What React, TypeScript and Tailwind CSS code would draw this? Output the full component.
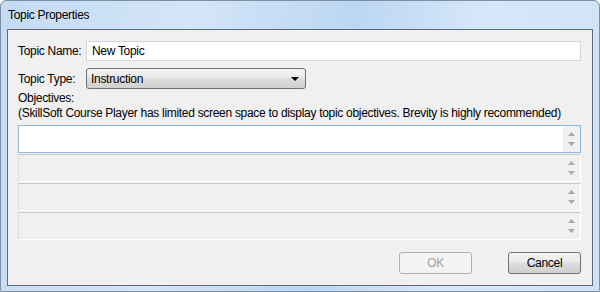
import React from "react";

const font = { fontFamily: '"Liberation Sans", Arial, sans-serif' };

// small scroll arrow for the objective boxes
const ScrollArrows: React.FC = () => (
  <div className="flex w-[17px] flex-col items-center justify-between bg-[#f0f0f0] py-[6px]">
    <svg width="7" height="4" viewBox="0 0 7 4">
      <path d="M3.5 0 L7 4 L0 4 Z" fill="#a8a8a8" />
    </svg>
    <svg width="7" height="4" viewBox="0 0 7 4">
      <path d="M0 0 L7 0 L3.5 4 Z" fill="#a8a8a8" />
    </svg>
  </div>
);

const ObjectiveBox: React.FC<{ active?: boolean }> = ({ active }) => (
  <div
    className={
      active
        ? "flex h-[28px] shrink-0 border border-[#8fb7dd] bg-white"
        : "flex h-[28px] shrink-0 border border-t-[#c8c8c8] border-l-[#dcdcdc] border-r-[#ffffff] border-b-[#ffffff] bg-[#f0f0f0]"
    }
  >
    <div className="flex-1" />
    <ScrollArrows />
  </div>
);

export default function App() {
  return (
    <div
      className="flex h-[292px] w-[600px] flex-col overflow-hidden rounded-t-[6px] border border-[#7d8fa3] bg-[linear-gradient(100deg,#c4dbf3_0%,#d3e5f8_30%,#bcd6f2_55%,#d6e7f9_75%,#cfe2f7_100%)] px-[6px] pb-[5px] tracking-[-0.3px]"
      style={font}
    >
      {/* Title bar */}
      <div className="flex h-[28px] shrink-0 items-center pl-[1px] text-[12px] text-black">Topic Properties</div>

      {/* Client area */}
      <div className="flex min-h-0 flex-1 flex-col border border-[#5f6b77] bg-[#f0f0f0] pb-[11px] pl-[10px] pr-[11px] pt-[11px] text-[12px] text-black">
        <div className="flex items-center">
          <div className="w-[68px] shrink-0 whitespace-nowrap">Topic Name:</div>
          <div className="flex h-[20px] flex-1 items-center border border-[#d3d6da] bg-white pl-[5px]">New Topic</div>
        </div>

        <div className="mt-[7px] flex items-center">
          <div className="w-[68px] shrink-0 whitespace-nowrap">Topic Type:</div>
          <div className="flex h-[21px] w-[220px] items-center justify-between rounded-[3px] border border-[#707070] bg-[linear-gradient(#f2f2f2_0%,#ebebeb_45%,#dddddd_50%,#cfcfcf_100%)] pl-[4px] pr-[6px]">
            <span>Instruction</span>
            <svg width="8" height="4" viewBox="0 0 8 4">
              <path d="M0 0 L8 0 L4 4 Z" fill="#000" />
            </svg>
          </div>
        </div>

        <div className="mt-[2px] whitespace-nowrap leading-[15px]">
          <div>Objectives:</div>
          <div>(SkillSoft Course Player has limited screen space to display topic objectives. Brevity is highly recommended)</div>
        </div>

        <div className="mt-[4px] flex flex-col gap-[1px]">
          <ObjectiveBox active />
          <ObjectiveBox />
          <ObjectiveBox />
          <ObjectiveBox />
        </div>

        <div className="mt-auto flex justify-end gap-[36px]">
          <div className="flex h-[22px] w-[73px] items-center justify-center rounded-[3px] border border-[#adb2b5] bg-[#f4f4f4] text-[#a0a0a0]">
            OK
          </div>
          <div className="flex h-[22px] w-[73px] items-center justify-center rounded-[3px] border border-[#707070] bg-[linear-gradient(#f2f2f2_0%,#ebebeb_45%,#dddddd_50%,#cfcfcf_100%)]">
            Cancel
          </div>
        </div>
      </div>
    </div>
  );
}
